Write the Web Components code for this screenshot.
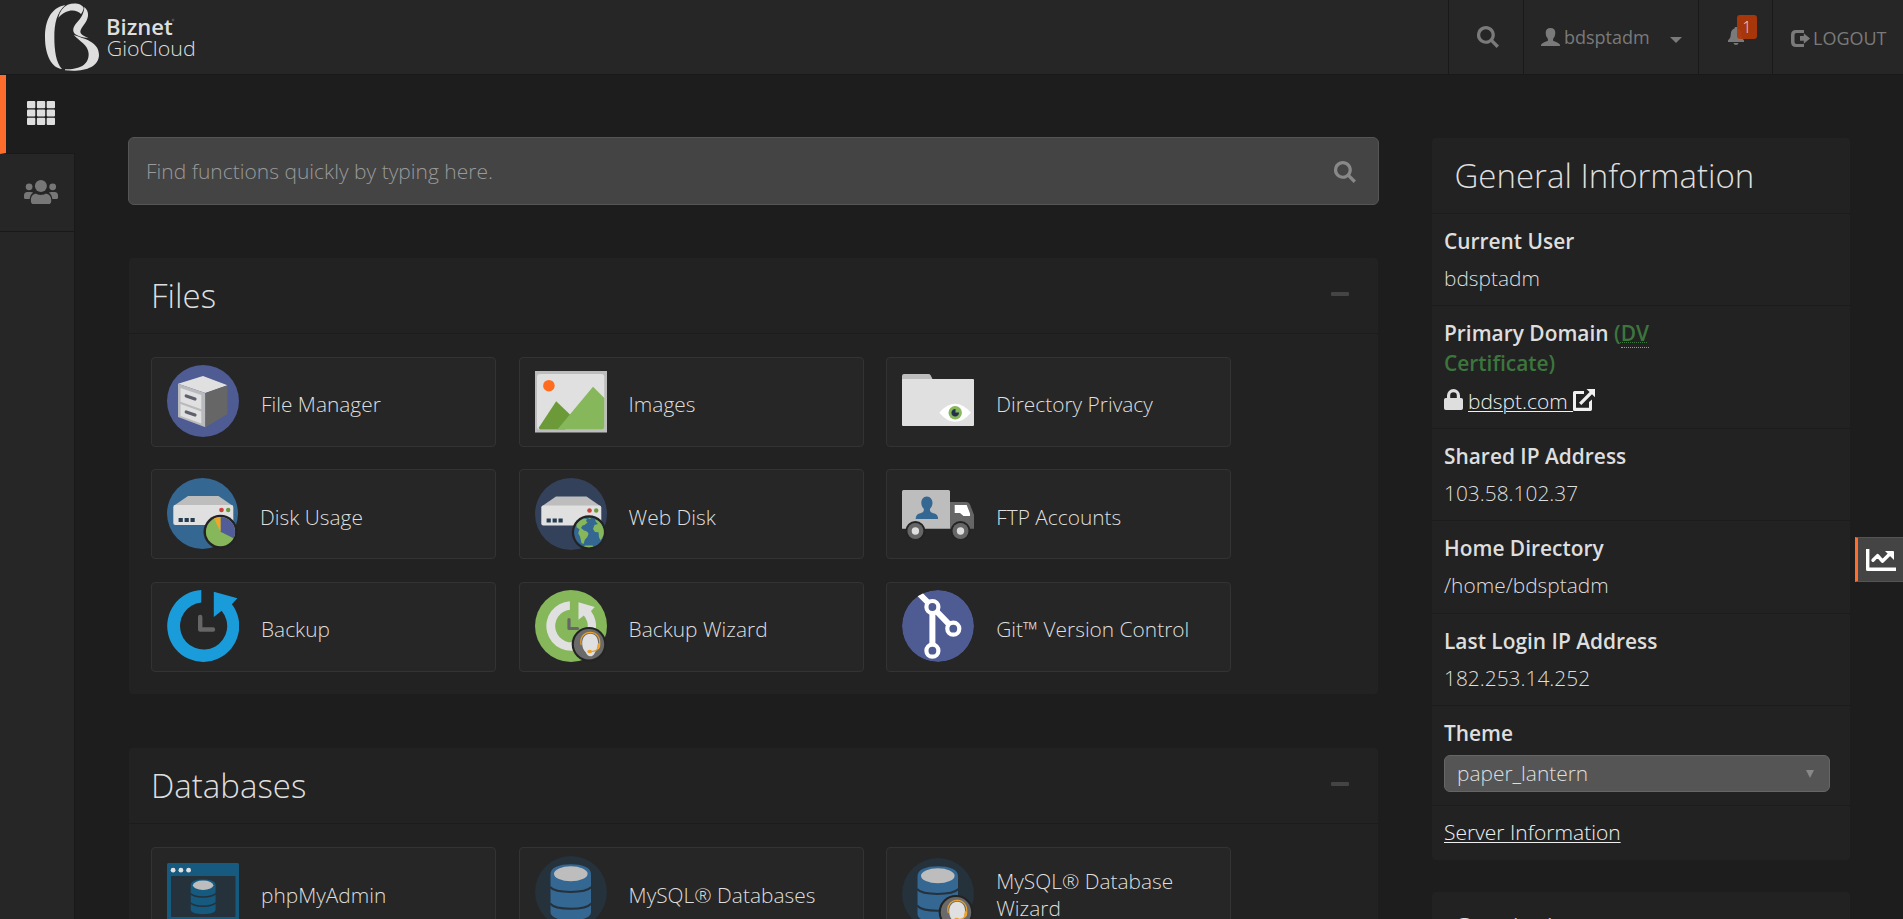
<!DOCTYPE html>
<html lang="en">
<head>
<meta charset="utf-8">
<title>cPanel - Main</title>
<style>
html,body{margin:0;height:100%;background:#1d1d1d;overflow:hidden}
body{font-family:"Open Sans","Noto Sans",sans-serif;font-weight:300;color:#dedede}
</style>
</head>
<body>
<cp-app>
  <cp-header slot="header"></cp-header>
  <cp-sidebar slot="nav"></cp-sidebar>
  <cp-search slot="main">Find functions quickly by typing here.</cp-search>
  <cp-panel slot="main" heading="Files">
    <cp-tile icon="filemanager">File Manager</cp-tile>
    <cp-tile icon="images">Images</cp-tile>
    <cp-tile icon="privacy">Directory Privacy</cp-tile>
    <cp-tile icon="diskusage">Disk Usage</cp-tile>
    <cp-tile icon="webdisk">Web Disk</cp-tile>
    <cp-tile icon="ftp">FTP Accounts</cp-tile>
    <cp-tile icon="backup">Backup</cp-tile>
    <cp-tile icon="backupwizard">Backup Wizard</cp-tile>
    <cp-tile icon="git">Git™ Version Control</cp-tile>
  </cp-panel>
  <cp-panel slot="main" heading="Databases">
    <cp-tile icon="phpmyadmin">phpMyAdmin</cp-tile>
    <cp-tile icon="mysql">MySQL® Databases</cp-tile>
    <cp-tile icon="mysqlwizard">MySQL® Database Wizard</cp-tile>
  </cp-panel>
  <cp-info slot="aside"></cp-info>
  <cp-stats-tab slot="overlay"></cp-stats-tab>
</cp-app>

<script>
const define = (name, render) => customElements.define(name, class extends HTMLElement {
  constructor() {
    super();
    this.attachShadow({ mode: 'open' });
  }
  connectedCallback() {
    this.shadowRoot.innerHTML = render(this);
  }
});

/* Shared fragments of the feature icons, drawn on a 72px grid */
const badge = `<circle cx="54" cy="54.2" r="17.3" fill="#232323"/><circle cx="54" cy="54.2" r="15.200" fill="#6a6a6a"/>
<path d="M55.300 43.800c5 0 7.800 4 7.800 9.500c0 4-1.200 6.500-2.800 8.500c-.8 2-2 4.500-4.600 4.500c-3 0-4-2-5-4c-2.200-2-3.500-5-3.500-9c0-5.500 3.100-9.500 8.100-9.500z" fill="#e0e0e0"/>
<path d="M46.300 55c-2-7 2.400-12.700 8.900-12.700c6.700 0 10.600 5.500 9.300 13c-.7 3.700-3.400 6-8.500 6.300" fill="none" stroke="#e8a22d" stroke-width="1.200"/>
<path d="M62.800 53.500c1.700-.6 2.700.3 2.400 2.400s-1.700 4-3.500 3.300z" fill="#f0a62a"/><ellipse cx="54.700" cy="61.500" rx="2.400" ry="1.800" fill="#e8a22d"/>`;
const arrow = c => `<path fill="${c}" d="M34.300 0A36 36 0 1 0 64.900 14.200L70.400 8.300L46.800 1.700V27L54.600 20.700A23.600 23.600 0 1 1 34.300 12.500Z"/>`;
const drive = `<path d="M21 18.500H51.500L66 28.500H6.500z" fill="#bdbdbd"/><rect x="6.300" y="27.600" width="60" height="20" rx="2" fill="#e0e0e0"/>
<circle cx="54.500" cy="32.500" r="2.300" fill="#c8433a"/><circle cx="61.200" cy="32.500" r="2.200" fill="#6c9a38"/>
<path d="M11.600 40.500h4.200v4h-4.200zM17.600 40.500h4.200v4h-4.200zM23.500 40.500h4.200v4h-4.200z" fill="#243b50"/>`;
const cylinder = `<circle cx="36" cy="36" r="36" fill="#25313b"/>
<path d="M15.500 18C15.500 11.500 24 8.200 35.800 8.200S56 11.500 56 18V56C56 61.500 47 64.500 35.800 64.500S15.500 61.500 15.500 56z" fill="#346792"/>
<ellipse cx="35.800" cy="17.700" rx="16.800" ry="7.500" fill="#bdbdbd"/>
<path d="M15 31C21 37.500 50 37.500 56.500 31M15 47.500C21 54.500 50 54.500 56.500 47.500" fill="none" stroke="#25313b" stroke-width="2"/>`;

/* name: [width, height, artwork, distance from the tile's top border] */
const ART = {
filemanager: [72,72,`<circle cx="36" cy="36" r="36" fill="#4f5b93"/><path d="M36 11L60.500 20.300L38.400 28L11 18.700z" fill="#e0e0e0"/><path d="M11 18.700L38.400 28V62.300L11 52z" fill="#b9babe"/><path d="M60.500 20.300V49L38.400 62.300V28z" fill="#666"/><path d="M13.500 23L34.300 30V44.300L13.500 36.700zM13.500 39L34.300 46.400V58.600L13.500 50.900z" fill="#e0e0e0"/><path d="M19.200 30.900L28 34M19.200 47L28 50" stroke="#5d616b" stroke-width="3.200" stroke-linecap="round"/>`,7],
images: [72,62,`<path d="M0 0H72V61.500H0z" fill="#bdbdbd"/><rect x="2" y="3" width="67.300" height="55.500" rx="3" fill="#e0e0e0"/><circle cx="13.900" cy="14.700" r="5.800" fill="#ff6c1f"/><path d="M21.200 30.300L36 44.500L30 58.500H5.500Q3.700 58.500 3.900 56.500z" fill="#6c9a38"/><path d="M58 15.700L69.300 27V55.500Q69.300 58.500 66.300 58.500H22.400z" fill="#86b75b"/>`,13],
privacy: [72,52,`<path d="M0 2Q0 0 2 0H26.500Q28 0 28.600 1.300L31 6H0z" fill="#bdbdbd"/><rect y="5" width="72" height="47" rx="1" fill="#e0e0e0"/><path d="M37.300 38.700Q53 21 69 38.700Q53 57 37.300 38.700z" fill="#fff"/><circle cx="53.200" cy="38.700" r="6.700" fill="#86b75b"/><path d="M53.500 35v3.500h3.500a3.800 3.800 0 1 1-3.500-3.500z" fill="#22304a"/>`,16],
diskusage: [71,71,`<circle cx="35.500" cy="35.500" r="35.500" fill="#346792"/><g transform="translate(0 -.5)">${drive}</g><circle cx="53.500" cy="53.700" r="17" fill="#232323"/><circle cx="53.500" cy="53.700" r="14.600" fill="#86b75b"/><path d="M53.500 53.700V39.100A14.600 14.600 0 0 1 66.600 60.200z" fill="#515c98"/><path d="M53.500 53.700L47 40.600A14.600 14.600 0 0 1 53.500 39.100z" fill="#f0a62a"/>`,7.5],
webdisk: [72,72,`<circle cx="36" cy="36" r="36" fill="#33415b"/>${drive}<circle cx="54" cy="54.500" r="17.200" fill="#232323"/><circle cx="54" cy="54.500" r="14.900" fill="#346792"/><path d="M41.500 46.500q3-4.500 7.500-6l3 .6l-1 2l1.500 1.500l-3 2.500l-2 .5l-1.500 2.500l3 2.500q4 .8 4.500 3.500q-1 4-3.500 5.500l-1.500 4.500l-2-1l-1.500-6.500l-1.800-3.300l1.300-4l-3-2zM63 46l-3.500 1l-1.500 4l2 3l3.500.3l.5 5l1.500 3q3.500-4 3.300-8.500q-.3-6-4.300-9.800l-2-1.500l-2.500-1l1 2.500zM49 68.600q5 1.200 9.500 0l-1-1.200h-7.500zM53 40.200l3-.1l-1 1.200z" fill="#86b75b"/>`,7.5],
ftp: [72,49,`<path d="M0 1.500Q0 0 1.500 0H46.500Q48 0 48 1.500V38.700H0z" fill="#bdbdbd"/><path d="M48 12H64Q67 12 68.200 15L72 25V38.700H48z" fill="#666"/><path d="M52.700 15H64.700L68 23.500V26H61.500L58 23H52.700z" fill="#fff"/><path d="M24.800 6.500c3.500 0 5.700 3 5.700 6.500c0 2.600-1.300 4.600-2.600 6c0 3 1 3.400 4.600 4.600c2.400.9 3.600 2.400 3.600 5.400H13.700c0-3 1.200-4.500 3.600-5.400c3.600-1.200 4.600-1.600 4.600-4.600c-1.300-1.400-2.600-3.400-2.600-6c0-3.500 2-6.500 5.500-6.500z" fill="#346792"/><g fill="#232323"><circle cx="13.400" cy="41" r="10"/><circle cx="58.500" cy="41" r="10"/></g><g fill="#666"><circle cx="13.400" cy="41" r="8"/><circle cx="58.500" cy="41" r="8"/></g><g fill="#dedede"><circle cx="13.400" cy="41" r="3.700"/><circle cx="58.500" cy="41" r="3.700"/></g>`,19.5],
backup: [72,72,arrow('#1a9cdb')+`<path d="M33.200 27V39.500H46" fill="none" stroke="#666" stroke-width="4.400" stroke-linecap="round" stroke-linejoin="round"/>`,7],
backupwizard: [72,72,`<circle cx="36" cy="36" r="36" fill="#86b75b"/><g transform="translate(11.200 11.200) scale(.69)">${arrow('#e0e0e0')}</g><path d="M34 29.500V38.500H42.500" fill="none" stroke="#666" stroke-width="3.200" stroke-linecap="round" stroke-linejoin="round"/>${badge}`,7],
git: [72,72,`<clipPath id="c"><circle cx="36" cy="36" r="36"/></clipPath><g clip-path="url(#c)"><circle cx="36" cy="36" r="36" fill="#4f5b93"/><path d="M16.500 3L30.400 17L51.300 38.700M30.400 17V60.700" stroke="#fff" stroke-width="6" fill="none"/><g fill="#4f5b93" stroke="#fff" stroke-width="4.200"><circle cx="30.400" cy="17" r="6"/><circle cx="51.300" cy="38.700" r="6"/><circle cx="30.400" cy="60.700" r="6"/></g></g>`,7],
phpmyadmin: [72,58,`<rect width="72" height="58" rx="1.500" fill="#165a7f"/><rect x="4" y="13" width="64.500" height="41" rx="1" fill="#25313b"/><g fill="#e0e0e0"><circle cx="6.100" cy="7.200" r="2.400"/><circle cx="13.900" cy="7.200" r="2.400"/><circle cx="21.600" cy="7.200" r="2.400"/></g><path d="M23.700 22c0-4 5-5.600 12.400-5.600s12.500 1.600 12.500 5.600v24.500c0 3-5 4.600-12.500 4.600s-12.400-1.600-12.400-4.600z" fill="#165a7f"/><ellipse cx="36.100" cy="22.200" rx="10.200" ry="4.700" fill="#bdbdbd"/><path d="M23.300 30.500c4 4.500 21.500 4.500 25.700 0M23.300 39.800c4 4.500 21.500 4.500 25.700 0" fill="none" stroke="#25313b" stroke-width="1.500"/>`,15],
mysql: [72,72,cylinder,7.5],
mysqlwizard: [72,72,cylinder+badge,9.5]
};

/* Small monochrome glyphs */
const GLYPH = {
  search: ['0 0 22 22','<path fill-rule="evenodd" d="M8.900 0a8.900 8.900 0 1 1-4.600 16.500A8.900 8.900 0 0 1 8.900 0zm0 3.300a5.700 5.700 0 1 0 0 11.400a5.700 5.700 0 0 0 0-11.400z"/><path d="M13.300 15.500l2.300-2.300l6.400 6.200l-2.400 2.500z"/>'],
  user: ['0 0 19 18','<path d="M9.500 0c3.200 0 4.800 2 4.800 4.800c0 3-1.100 5-2.200 5.900v2c2.300 1 5.400 2.200 6.400 3.300c.4.500.5 1 .5 2H0c0-1 .1-1.500.5-2c1-1.100 4.100-2.300 6.400-3.300v-2C5.800 9.800 4.700 7.800 4.700 4.800C4.700 2 6.300 0 9.500 0z"/>'],
  bell: ['0 0 16 18','<path d="M8 0c1 0 1.500.5 1.500 1.400C12 2 13 4 13.200 7c.2 3.500.8 4.500 2.800 6.300V15H0v-1.700C2 11.500 2.600 10.500 2.800 7C3 4 4 2 6.500 1.400C6.500.5 7 0 8 0zM5.500 16h5c-.3 1.300-1.200 2-2.500 2s-2.200-.7-2.500-2z"/>'],
  logout: ['0 0 19 17','<path d="M5 0h8v3H5.500Q3.500 3 3.500 5v7q0 2 2 2H13v3H5q-5 0-5-5V5q0-5 5-5z"/><path d="M12.800 3.200L19 8.500l-6.200 5.300v-3H9V6h3.800z"/>'],
  lock: ['0 0 19 21','<path fill-rule="evenodd" d="M1.800 9H3V6.500a6.500 6.500 0 0 1 13 0V9h1.200Q19 9 19 10.800v8.400Q19 21 17.200 21H1.800Q0 21 0 19.200v-8.400Q0 9 1.800 9zM6.200 9h6.600V6.500a3.300 3.300 0 0 0-6.600 0z"/>'],
  ext: ['0 0 22 22','<path d="M13.500 0H22v8.200l-3-2.900L8.300 16L6 13.700L16.600 3z"/><path d="M0 3.500Q0 2 1.500 2H11v3H3v13.700h13V13l3-2.500v9.800Q19 22 17.500 22h-16Q0 22 0 20.500z"/>'],
  grid: ['0 0 28 24','<g><rect width="8.300" height="7.200" rx="1"/><rect x="9.900" width="8.300" height="7.200" rx="1"/><rect x="19.700" width="8.300" height="7.200" rx="1"/><rect y="8.400" width="8.300" height="7.200" rx="1"/><rect x="9.900" y="8.400" width="8.300" height="7.200" rx="1"/><rect x="19.700" y="8.400" width="8.300" height="7.200" rx="1"/><rect y="16.800" width="8.300" height="7.200" rx="1"/><rect x="9.900" y="16.800" width="8.300" height="7.200" rx="1"/><rect x="19.700" y="16.800" width="8.300" height="7.200" rx="1"/></g>'],
  group: ['0 0 34 24','<circle cx="5.100" cy="6.800" r="3.400"/><circle cx="28.700" cy="6.800" r="3.400"/><circle cx="16.900" cy="6" r="6"/><path d="M12.300 13.700c2.500 1.600 6.700 1.600 9.200 0c3.500 0 5.700 2.600 5.700 6.300v1.200q0 2.800-2.800 2.800H9.700q-2.800 0-2.800-2.800V20c0-3.700 2-6.300 5.400-6.300zM3.400 12h3.400q1.300 0 2.400.7C7 14 6 16 5.700 19H1.500Q0 19 0 17.500v-2Q0 12 3.400 12zM30.600 12h-3.400q-1.300 0-2.400.7c2.200 1.300 3.200 3.300 3.500 6.300h4.200q1.500 0 1.500-1.500v-2q0-3.500-3.400-3.500z"/>'],
  chart: ['0 0 30 22','<path d="M0 0h3.400v18.500H30V22H1.500Q0 22 0 20.500z"/><path d="M7 11.200l4.600-4.600l4.800 5.600L24 4.700" fill="none" stroke="currentColor" stroke-width="3.400" stroke-linecap="round" stroke-linejoin="round"/><path d="M19 2h8q1 0 1 1v8z"/>']
};

define('cp-glyph', el => {
  const [vb, body] = GLYPH[el.getAttribute('name')];
  const [, , w, h] = vb.split(' ');
  return `<style>:host{display:inline-block;line-height:0}svg{display:block;fill:currentColor}</style>
  <svg width="${w}" height="${h}" viewBox="${vb}">${body}</svg>`;
});

define('cp-art', el => {
  const [w, h, body, top] = ART[el.getAttribute('name')];
  return `<style>:host{display:block;width:${w}px;height:${h}px;margin-top:${top}px;flex:none}svg{display:block}</style>
  <svg width="${w}" height="${h}" viewBox="0 0 ${w} ${h}">${body}</svg>`;
});

define('cp-app', () => `<style>
:host{display:grid;grid-template:75px 844px / 75px 1fr;width:1903px;height:919px;overflow:hidden;position:relative}
.h{grid-column:1/3}
.content{display:flex;padding:62px 0 0 53px;gap:53px;overflow:hidden;align-items:flex-start}
main{width:1251px;display:flex;flex-direction:column;flex:none}
aside{width:418px;flex:none;padding-top:1px}
</style>
<div class="h"><slot name="header"></slot></div><slot name="nav"></slot>
<div class="content"><main><slot name="main"></slot></main><aside><slot name="aside"></slot></aside></div>
<slot name="overlay"></slot>`);

define('cp-header', () => `<style>
:host{display:flex;box-sizing:border-box;height:75px;background:#262626;border-bottom:1px solid #191919;color:#7a7a7a;font-weight:400}
.logo{flex:1}
.logo svg{display:block}
.cell{box-sizing:border-box;border-left:1px solid #191919;display:flex;align-items:center;height:74px;position:relative}
.s{width:75px;padding:0 0 0 28px}
.u{width:175px;padding-left:17px;font-size:18px}
.u span{margin:-1px 0 0 4px;width:106px}
.caret{border:6px solid transparent;border-top-color:#7a7a7a;border-bottom:0;margin-top:5px}
.b{width:74px;padding:0 0 2px 29px}
.n{position:absolute;left:38px;top:15px;width:20px;height:24px;border-radius:3px;background:#b1390aee;color:#dedede;font-size:15.500px;line-height:25px;text-align:center;font-weight:300}
.l{width:131px;padding-left:18px;font-size:18px}
.l span{margin:1px 0 0 3px}
.l cp-glyph{margin-top:3px}
</style>
<div class="logo"><svg width="240" height="74" viewBox="0 0 720 222"><g fill="#dedede">
<path d="M196 15C150 24 135 65 135 112C135 165 155 205 186 207C168 190 163 150 163 112C163 70 170 38 196 15z"/>
<path d="M175 53C179 35 188 22 203 14C220 8 245 9 251 24C250 32 247 37 243 42C228 26 198 27 175 53z"/>
<path d="M253 21C268 34 267 52 256 68C244 85 237 93 244 102C249 108 258 110 266 115C247 112 230 108 223 100C216 89 221 78 232 66C243 54 252 41 253 21z"/>
<path d="M221 104C235 112 298 120 297 165C296 203 250 217 195 211V208C238 208 266 196 266 162C266 135 236 122 221 104z"/></g>
<g fill="#dedede" font-family="'Open Sans','Noto Sans',sans-serif"><text x="318" y="104" font-size="66" font-weight="600" textLength="200" lengthAdjust="spacingAndGlyphs">Biznet</text>
<text x="320" y="168" font-size="62" font-weight="300" textLength="267" lengthAdjust="spacingAndGlyphs">GioCloud</text></g><circle cx="519" cy="60" r="3" fill="none" stroke="#aaa"/></svg></div>
<div class="cell s"><cp-glyph name="search"></cp-glyph></div>
<div class="cell u"><cp-glyph name="user"></cp-glyph><span>bdsptadm</span><i class="caret"></i></div>
<div class="cell b"><cp-glyph name="bell"></cp-glyph><div class="n">1</div></div>
<div class="cell l"><cp-glyph name="logout"></cp-glyph><span>LOGOUT</span></div>`);

define('cp-sidebar', () => `<style>
:host{display:flex;flex-direction:column;box-sizing:border-box;background:#262626;border-right:1px solid #191919}
div{box-sizing:border-box;height:78px;border-bottom:1px solid #191919;display:flex;align-items:center;justify-content:center;flex:none}
.on{height:79px;background:#1d1d1d;border-left:6px solid #ff6c2c;color:#dedede;padding:0 0 2px 1px;margin-right:-1px}
.off{color:#777;padding:0 0 1px 8px}
</style>
<div class="on"><cp-glyph name="grid"></cp-glyph></div><div class="off"><cp-glyph name="group"></cp-glyph></div>`);

define('cp-search', () => `<style>
:host{display:flex;box-sizing:border-box;height:68px;background:#444;border:1px solid #555;border-radius:6px;align-items:center;justify-content:space-between;padding:0 22px 0 17px;color:#999;font-size:21px}
cp-glyph{color:#888;margin:2px 0 0}
</style><slot></slot><cp-glyph name="search"></cp-glyph>`);

define('cp-panel', el => `<style>
:host{display:block;background:#222;border-radius:4px;margin:53px 1px 1.800px}
header{display:flex;box-sizing:border-box;height:76px;border-bottom:1px solid #1c1c1c;padding:0 29px 0 22px;justify-content:space-between;font-size:33px;line-height:75px}
i{width:18px;height:4px;background:#444;margin-top:34px;border-radius:1px}
.grid{display:grid;grid-template-columns:repeat(3,345px);gap:22.400px 22.600px;padding:23px 22px 21.800px}
</style><header>${el.getAttribute('heading')}<i></i></header><div class="grid"><slot></slot></div>`);

define('cp-tile', el => `<style>
:host{display:flex;box-sizing:border-box;height:90px;background:#262626;border:1px solid #333;border-radius:4px;padding-left:15px;font-size:20.900px;line-height:26.500px}
div{padding:5px 30px 0 22px;align-self:center}
</style><cp-art name="${el.getAttribute('icon')}"></cp-art><div><slot></slot></div>`);

define('cp-row', el => `<style>
:host{display:block;box-sizing:border-box;border-bottom:1px solid #1c1c1c;padding:12px 12px 0;height:${el.getAttribute('h')}px;font-size:20.900px;line-height:30px}
b{display:block;font-weight:600;width:260px}
.v{padding-top:7px}
</style><b><slot name="label"></slot></b><div class="v"><slot></slot></div>`);

define('cp-info', () => `<style>
:host{display:block}
.box{background:#222;border-radius:4px;margin-bottom:32px}
h2{margin:0;box-sizing:border-box;height:76px;border-bottom:1px solid #1c1c1c;padding-left:22.500px;font-weight:300;font-size:33px;line-height:75px}
.g{color:#3c763d}
.g u{text-decoration:underline dotted;text-decoration-thickness:1px;border-bottom:1px dotted #999}
a{color:#f0f0f0;text-decoration:underline;text-decoration-thickness:1px;text-underline-offset:2px}
.select{display:flex;box-sizing:border-box;width:386px;height:37px;background:#555;border:1px solid #666;border-radius:6px;align-items:center;justify-content:space-between;padding:0 15px 0 12px}
.select span{margin-top:-2px}
.select i{border:4.500px solid transparent;border-top:8px solid #888;border-bottom:0}
.last{box-sizing:border-box;height:54px;padding:11px 12px 0;font-size:21px;line-height:30px}
.dom{display:flex;align-items:flex-start;padding-top:1px}
.dom a{margin-left:5px;white-space:pre}
</style>
<div class="box"><h2>General Information</h2>
<cp-row h="92"><span slot="label">Current User</span>bdsptadm</cp-row>
<cp-row h="123"><span slot="label">Primary Domain <span class="g">(<u>DV</u> Certificate)</span></span><div class="dom"><cp-glyph name="lock" style="margin-top:3px"></cp-glyph><a>bdspt.com </a><cp-glyph name="ext" style="margin-top:3px;color:#f0f0f0"></cp-glyph></div></cp-row>
<cp-row h="92"><span slot="label">Shared IP Address</span>103.58.102.37</cp-row>
<cp-row h="93"><span slot="label">Home Directory</span>/home/bdsptadm</cp-row>
<cp-row h="92"><span slot="label">Last Login IP Address</span>182.253.14.252</cp-row>
<cp-row h="100"><span slot="label">Theme</span><div class="select"><span>paper_lantern</span><i></i></div></cp-row>
<div class="last"><a>Server Information</a></div></div>
<div class="box"><h2>Statistics</h2></div>`);

define('cp-stats-tab', () => `<style>
:host{display:flex;position:absolute;right:0;top:537px;box-sizing:border-box;width:48px;height:45px;background:#444;border:1px solid #555;border-width:1px 0;border-left:3px solid #ff6c2c;color:#fff;padding:11px 0 0 8px}
</style><cp-glyph name="chart"></cp-glyph>`);
</script>
</body>
</html>
